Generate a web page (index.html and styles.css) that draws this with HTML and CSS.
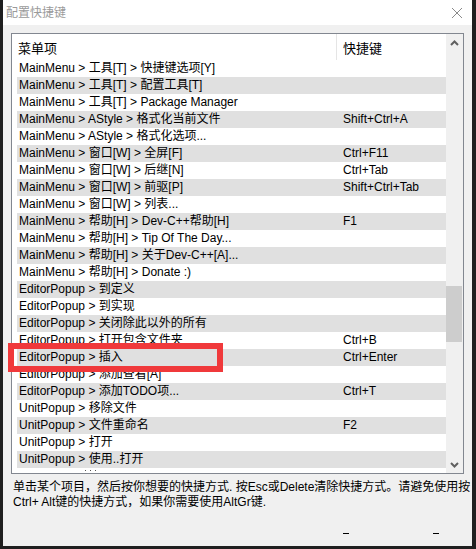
FILE: index.html
```html
<!DOCTYPE html>
<html lang="zh-CN">
<head>
<meta charset="utf-8">
<title>配置快捷键</title>
<link rel="stylesheet" href="styles.css">
</head>
<body>
<div class="window">
  <div class="titlebar">
    <span class="title">配置快捷键</span>
    <svg class="close" width="12" height="12" viewBox="0 0 12 12"><path d="M1 1 L11 11 M11 1 L1 11" stroke="#8a8a8a" stroke-width="1" fill="none"/></svg>
  </div>
  <div class="client">
    <div class="listbox">
      <div class="content">
        <div class="header">
          <div class="col-name">菜单项</div>
          <div class="col-key">快捷键</div>
        </div>
        <div class="rows">
          <div class="row"><div class="col-name">MainMenu &gt; 工具[T] &gt; 快捷键选项[Y]</div><div class="col-key"></div></div>
          <div class="row alt"><div class="col-name">MainMenu &gt; 工具[T] &gt; 配置工具[T]</div><div class="col-key"></div></div>
          <div class="row"><div class="col-name">MainMenu &gt; 工具[T] &gt; Package Manager</div><div class="col-key"></div></div>
          <div class="row alt"><div class="col-name">MainMenu &gt; AStyle &gt; 格式化当前文件</div><div class="col-key">Shift+Ctrl+A</div></div>
          <div class="row"><div class="col-name">MainMenu &gt; AStyle &gt; 格式化选项...</div><div class="col-key"></div></div>
          <div class="row alt"><div class="col-name">MainMenu &gt; 窗口[W] &gt; 全屏[F]</div><div class="col-key">Ctrl+F11</div></div>
          <div class="row"><div class="col-name">MainMenu &gt; 窗口[W] &gt; 后继[N]</div><div class="col-key">Ctrl+Tab</div></div>
          <div class="row alt"><div class="col-name">MainMenu &gt; 窗口[W] &gt; 前驱[P]</div><div class="col-key">Shift+Ctrl+Tab</div></div>
          <div class="row"><div class="col-name">MainMenu &gt; 窗口[W] &gt; 列表...</div><div class="col-key"></div></div>
          <div class="row alt"><div class="col-name">MainMenu &gt; 帮助[H] &gt; Dev-C++帮助[H]</div><div class="col-key">F1</div></div>
          <div class="row"><div class="col-name">MainMenu &gt; 帮助[H] &gt; Tip Of The Day...</div><div class="col-key"></div></div>
          <div class="row alt"><div class="col-name">MainMenu &gt; 帮助[H] &gt; 关于Dev-C++[A]...</div><div class="col-key"></div></div>
          <div class="row"><div class="col-name">MainMenu &gt; 帮助[H] &gt; Donate :)</div><div class="col-key"></div></div>
          <div class="row alt"><div class="col-name">EditorPopup &gt; 到定义</div><div class="col-key"></div></div>
          <div class="row"><div class="col-name">EditorPopup &gt; 到实现</div><div class="col-key"></div></div>
          <div class="row alt"><div class="col-name">EditorPopup &gt; 关闭除此以外的所有</div><div class="col-key"></div></div>
          <div class="row"><div class="col-name">EditorPopup &gt; 打开包含文件夹</div><div class="col-key">Ctrl+B</div></div>
          <div class="row alt"><div class="col-name">EditorPopup &gt; 插入</div><div class="col-key">Ctrl+Enter</div></div>
          <div class="row"><div class="col-name">EditorPopup &gt; 添加查看[A]</div><div class="col-key"></div></div>
          <div class="row alt"><div class="col-name">EditorPopup &gt; 添加TODO项...</div><div class="col-key">Ctrl+T</div></div>
          <div class="row"><div class="col-name">UnitPopup &gt; 移除文件</div><div class="col-key"></div></div>
          <div class="row alt"><div class="col-name">UnitPopup &gt; 文件重命名</div><div class="col-key">F2</div></div>
          <div class="row"><div class="col-name">UnitPopup &gt; 打开</div><div class="col-key"></div></div>
          <div class="row alt"><div class="col-name">UnitPopup &gt; 使用..打开</div><div class="col-key"></div></div>
          <div class="row"><div class="col-name"><span class="clipped-dots"></span></div><div class="col-key"></div></div>
        </div>
      </div>
      <div class="scrollbar">
        <div class="sb-btn">
          <svg width="9" height="6" viewBox="0 0 9 6"><path d="M1 5 L4.5 1.5 L8 5" stroke="#606060" stroke-width="2" fill="none"/></svg>
        </div>
        <div class="sb-track"><div class="sb-thumb"></div></div>
        <div class="sb-btn">
          <svg width="9" height="6" viewBox="0 0 9 6"><path d="M1 1 L4.5 4.5 L8 1" stroke="#606060" stroke-width="2" fill="none"/></svg>
        </div>
      </div>
    </div>
    <div class="hint">
      <div class="hint-line">单击某个项目，然后按你想要的快捷方式. 按Esc或Delete清除快捷方式。请避免使用按</div>
      <div class="hint-line">Ctrl+ Alt键的快捷方式，如果你需要使用AltGr键.</div>
    </div>
    <div class="buttons">
      <span class="mark"></span>
      <span class="mark"></span>
    </div>
  </div>
  <div class="annotation"></div>
</div>
</body>
</html>
```

FILE: styles.css
```css
html, body {
  margin: 0;
  padding: 0;
  background: #1f1f1f;
}

.window {
  position: relative;
  width: 476px;
  height: 549px;
  box-sizing: border-box;
  border-left: 3px solid #1f1f1f;
  border-right: 4px solid #1f1f1f;
  border-bottom: 3px solid #1f1f1f;
  display: flex;
  flex-direction: column;
  font-family: "Liberation Sans", "Noto Sans CJK SC", sans-serif;
  font-size: 12px;
  color: #000;
}

.titlebar {
  height: 25px;
  background: #fff;
  display: flex;
  align-items: center;
  justify-content: space-between;
  padding: 0 9px 0 3px;
}

.title {
  color: #9a9a9a;
  font-size: 12px;
  line-height: 14px;
}

.close {
  display: block;
}

.client {
  flex: 1;
  background: #f0f0f0;
  padding: 8px 8px 0 8px;
  display: flex;
  flex-direction: column;
}

.listbox {
  height: 441px;
  flex: none;
  box-sizing: border-box;
  border: 1px solid #828790;
  background: #fff;
  display: flex;
}

.content {
  flex: 1;
  padding-left: 5px;
  display: flex;
  flex-direction: column;
  overflow: hidden;
}

.header {
  height: 26px;
  flex: none;
  display: flex;
  align-items: stretch;
  font-size: 13px;
}

.header .col-name {
  width: 320px;
  padding-left: 1px;
  display: flex;
  align-items: center;
  border-right: 1px solid #e5e5e5;
  box-sizing: border-box;
}

.header .col-key {
  padding-left: 6px;
  display: flex;
  align-items: center;
}

.rows {
  flex: 1;
  overflow: hidden;
}

.row {
  height: 17px;
  display: flex;
  line-height: 17px;
  white-space: nowrap;
}

.row.alt {
  background: #e0e0e0;
}

.row .col-name {
  width: 320px;
  padding-left: 2px;
  box-sizing: border-box;
  overflow: hidden;
}

.row .col-key {
  padding-left: 6px;
}

.clipped-dots {
  display: block;
  width: 14px;
  height: 1px;
  margin: 2px 0 0 64px;
  background-image: radial-gradient(circle, #555 0.8px, transparent 1px);
  background-size: 5px 1px;
}

.scrollbar {
  width: 17px;
  flex: none;
  background: #f0f0f0;
  display: flex;
  flex-direction: column;
}

.sb-btn {
  height: 17px;
  display: flex;
  align-items: center;
  justify-content: center;
}

.sb-btn svg {
  display: block;
}

.sb-track {
  flex: 1;
  padding: 0 1px 0 0;
}

.sb-thumb {
  margin-top: 235px;
  height: 56px;
  background: #cdcdcd;
}

.hint {
  margin: 6px 0 0 2px;
  font-size: 12px;
}

.hint-line {
  height: 15px;
  line-height: 15px;
  white-space: nowrap;
}

.buttons {
  display: flex;
  gap: 84px;
  padding-left: 332px;
  margin-top: 23px;
}

.mark {
  display: block;
  width: 6px;
  height: 1px;
  background: #000;
}

.annotation {
  position: absolute;
  left: 5px;
  top: 343px;
  width: 215px;
  height: 29px;
  box-sizing: border-box;
  border: 6px solid #f0393b;
}
```
